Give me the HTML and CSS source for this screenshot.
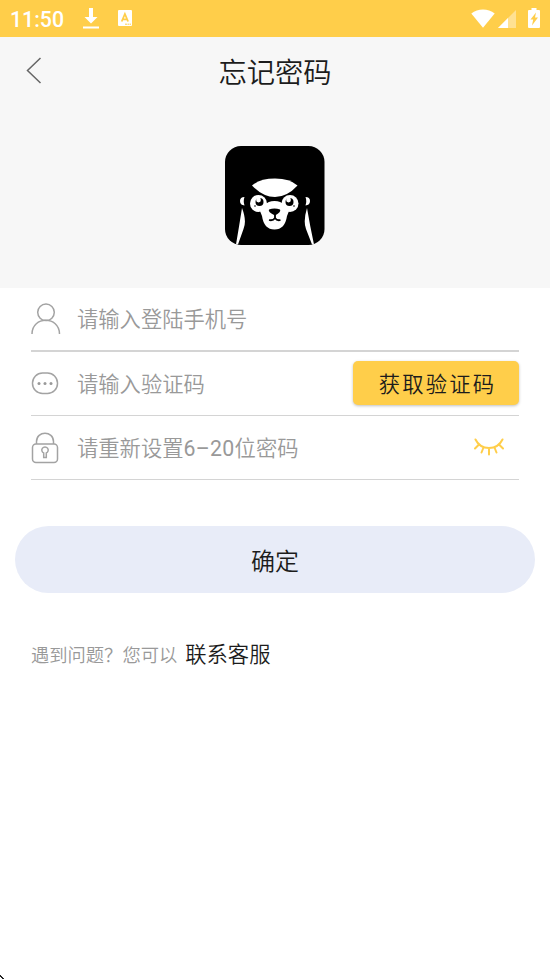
FILE: index.html
```html
<!DOCTYPE html>
<html lang="zh-CN">
<head>
<meta charset="utf-8">
<title>忘记密码</title>
<link rel="stylesheet" href="styles.css">
</head>
<body>
<div class="status">
  <span class="time">11:50</span>
  <svg class="download" width="16" height="21" viewBox="0 0 16 21"><path d="M6 0h4v9h4.500L8 15.500 1.500 9H6zM0 18.500h16v2H0z" fill="#fff"/></svg>
  <svg class="keyboard" width="14" height="16" viewBox="0 0 14 16"><rect width="14" height="16" rx="1" fill="#fff"/><path d="M3.700 11.500 6.900 4 10.100 11.500M4.900 9.300h4" fill="none" stroke="#ffce4a" stroke-width="1.800"/><path d="M7 14.200h6" stroke="#ffce4a" stroke-width="1" stroke-dasharray="2 .5"/></svg>
  <svg class="wifi" width="24" height="19" viewBox="0 0 24 19"><path d="M.3 4.500C7-1 17-1 23.700 4.500L12 18.800z" fill="#fff"/></svg>
  <svg class="signal" width="18" height="18" viewBox="0 0 18 18"><path d="M0 18 18 0v18z" fill="#fff" opacity=".4"/><path d="M0 18 10 8v10z" fill="#fff"/></svg>
  <svg class="battery" width="12" height="20" viewBox="0 0 12 20"><path d="M3.500 0h5v2H11q1 0 1 1v16q0 1-1 1H1q-1 0-1-1V3q0-1 1-1h2.500z" fill="#fff"/><path d="M8 4.500 2.500 11.500h2.700l-1.200 6L10 9.500H7z" fill="#ffce4a"/></svg>
</div>
<header class="head">
  <div class="nav">
    <svg class="back" width="16" height="28" viewBox="0 0 16 28"><path d="M14.500 1 1.500 13.500l13 12.500" fill="none" stroke="#666" stroke-width="1.500"/></svg>
    <h1 class="title">忘记密码</h1>
  </div>
  <svg class="logo" width="100" height="99" viewBox="0 0 100 99">
    <rect width="99.500" height="99" rx="16"/>
    <g fill="#fff">
      <path d="M27 39.500Q35 32.500 50 32.500T72.500 39.500Q62 51 50 51T27 39.500z"/>
      <circle cx="33.500" cy="57.500" r="8.500"/><circle cx="65" cy="57.500" r="8.500"/>
      <path d="M35 65Q40 63 40 59 43 55 49.500 55T59 59Q59 63 64 65L62 70Q60 83.500 49.500 83.500T37 70z"/>
      <path d="M19.500 51Q15 51 15 55t4.500 4.500Q18 55 19.500 51zM80.500 51Q85 51 85 55t-4.500 4.500Q82 55 80.500 51z"/>
      <path d="M17 62Q22 75 18.500 83L13 98.500H11Q14 81 17 62zM82 62Q78 75 81 83L87 98.500H89Q85 80 82 62z"/>
    </g>
    <path d="M44 63.500Q49.500 61.500 55 63.500 56.500 66 50 69.500 42.500 66 44 63.500z"/>
    <path d="M50 69v3.500M44 74q4 1 6-2 2 3 5.500 2" fill="none" stroke="#000" stroke-width="1.800"/>
    <circle cx="34.500" cy="56" r="4"/><circle cx="64.500" cy="56" r="4"/>
    <circle cx="33.500" cy="54" r="2.400" fill="#fff"/><circle cx="63.500" cy="54" r="2.400" fill="#fff"/>
    <circle cx="30" cy="60" r=".8"/><circle cx="69" cy="60" r=".8"/>
  </svg>
</header>
<main>
  <div class="form">
    <div class="row first">
      <svg class="icon" width="30" height="32" viewBox="0 0 30 32"><circle cx="15" cy="9.300" r="8.300"/><path d="M1 31C1 12.800 28.500 12.800 28.500 31"/></svg>
      <span class="hint">请输入登陆手机号</span>
    </div>
    <div class="row">
      <svg class="icon" width="30" height="32" viewBox="0 0 30 32"><rect x="2.500" y="5" width="25" height="20.500" rx="10"/><g class="dots"><circle cx="9" cy="15.500" r="1.500"/><circle cx="15" cy="15.500" r="1.500"/><circle cx="21" cy="15.500" r="1.500"/></g></svg>
      <span class="hint">请输入验证码</span>
      <span class="code">获取验证码</span>
    </div>
    <div class="row">
      <svg class="icon" width="30" height="32" viewBox="0 0 30 32"><rect x="2.500" y="12" width="25" height="18.500" rx="3.500"/><path d="M6.500 12V9.500C6.500-1.500 23.500-1.500 23.500 9.500V12"/><path d="M13.700 21a3.200 3.200 0 1 1 2.600 0v4.500h-2.600z"/></svg>
      <span class="hint">请重新设置<span class="digits">6–20</span>位密码</span>
      <svg class="eye" width="30" height="18" viewBox="0 0 30 18"><path d="M1.500 1.500C7 12.800 23 12.800 28.500 1.500M5 6.500l-4 4M25 6.500l4 4M9.500 9.500l-2 5M20.500 9.500l2 5M15 10v6.500"/></svg>
    </div>
  </div>
  <div class="submit">确定</div>
  <p class="help">遇到问题？您可以<span class="link">联系客服</span></p>
</main>
<svg class="corner" width="5" height="5" viewBox="0 0 5 5"><path d="M0 1h1v1h1v1h1v1h1v1H2V4H1V3H0z" fill="#222"/></svg>
</body>
</html>
```
FILE: styles.css
```css
* { box-sizing: border-box; }
body {
  margin: 0;
  height: 979px;
  overflow: hidden;
  background: #fff;
  color: #1c1c1c;
  font-family: Roboto, "Noto Sans CJK SC", sans-serif;
  font-weight: 350;
  position: relative;
}
svg { display: block; flex: none; }
.status {
  height: 37px;
  background: #ffce4a;
  display: flex;
  align-items: flex-start;
  padding: 0 10px;
}
.time { width: 73px; font-size: 21.3px; line-height: 39px; font-weight: 500; color: #fff; }
.download { margin-top: 8px; }
.keyboard { margin: 10px 0 0 19px; }
.wifi { margin: 9px -1px 0 auto; }
.signal { margin: 10px 0 0 4px; }
.battery { margin: 8px 0 0 12px; }
.head { height: 251px; background: #f7f7f7; }
.nav { height: 109px; padding: 20px 26px 0; display: grid; grid-template-columns: 16px 1fr 16px; align-items: start; }
.title { margin: -4px 0 0; font-size: 28.300px; line-height: 42px; font-weight: 350; text-align: center; }
.logo { margin-left: 225px; }
.form { padding: 0 31px; }
.row { height: 64px; border-bottom: 1px solid #d4d4d4; display: flex; align-items: center; }
.row.first { border-bottom-width: 2px; }
.icon { margin: 0 0 0 -1px; fill: none; stroke: #a3a3a3; stroke-width: 1.500; }
.first .icon { margin: 0; }
.dots { fill: #999; stroke: none; }
.hint { margin: 2px 0 0 17px; font-size: 21.300px; line-height: 32px; color: #999; }
.first .hint { margin: 2px 0 0 16px; }
.digits { font-weight: 400; letter-spacing: .3px; }
.code {
  margin: -2px 0 0 auto;
  width: 166px;
  height: 44px;
  padding-left: 3px;
  border-radius: 5px;
  background: #ffce4a;
  box-shadow: 0 1px 3px rgba(0, 0, 0, .25);
  font-size: 21.300px;
  line-height: 47px;
  letter-spacing: 2.200px;
  text-align: center;
}
.eye { margin: -2px 15px 0 auto; fill: none; stroke: #ffce4a; stroke-width: 2; stroke-linecap: round; }
.submit { height: 67px; margin: 46px 15px 0; border-radius: 34px; background: #e8ecf8; font-size: 24px; line-height: 72px; text-align: center; }
.help { margin: 46px 31px 0; font-size: 18.300px; line-height: 32px; color: #999; }
.link { margin-left: 8px; font-size: 21.300px; color: #1c1c1c; }
.corner { position: absolute; left: 0; bottom: 0; }
```
